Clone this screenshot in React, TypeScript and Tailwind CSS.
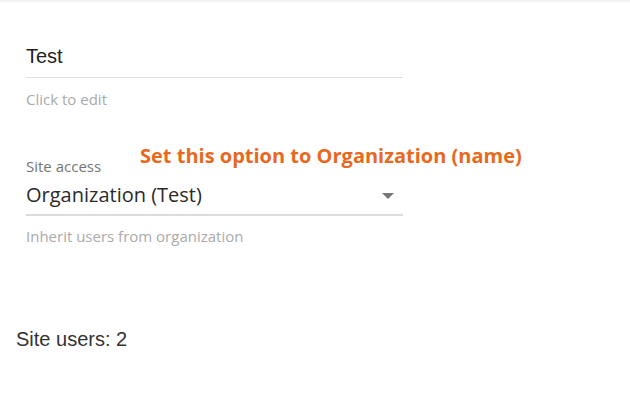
export default function App() {
  return (
    <div className="relative h-[409px] w-[630px] overflow-hidden bg-white">
      <div className="h-[3px] w-full bg-gradient-to-b from-[#ececec] to-white" />
      <div className="pl-[26px] pt-[39px]">
        <div className="w-[377px]">
          <div className="border-b border-[#dedede] pb-[7px] font-['Liberation_Sans',Arial,sans-serif] text-[20px] leading-[28px] text-[#222]">
            Test
          </div>
          <div className="mt-[11px] font-['Open_Sans',sans-serif] text-[15px] leading-[20px] text-[#aaaaaa]">
            Click to edit
          </div>
        </div>
        <div className="mt-[47px] w-[377px]">
          <div className="relative font-['Open_Sans',sans-serif] text-[15px] leading-[20px] text-[#757575]">
            Site access
            <span className="absolute left-[114px] top-[-14px] whitespace-nowrap text-[20px] font-bold leading-[28px] text-[#e8691d]">
              Set this option to Organization (name)
            </span>
          </div>
          <div className="flex items-start justify-between border-b-2 border-[#dcdcdc] pb-[5px] pr-[9px] pt-[5px]">
            <span className="font-['Open_Sans',sans-serif] text-[20px] leading-[28px] text-[#2b2b2b]">
              Organization (Test)
            </span>
            <svg width="12" height="6" viewBox="0 0 12 6" className="mt-[12px]">
              <path d="M0 0 L12 0 L6 6 Z" fill="#777" />
            </svg>
          </div>
          <div className="mt-[10px] font-['Open_Sans',sans-serif] text-[15px] leading-[20px] text-[#aaaaaa]">
            Inherit users from organization
          </div>
        </div>
      </div>
      <div className="ml-[16px] mt-[79px] font-['Liberation_Sans',Arial,sans-serif] text-[20px] leading-[28px] text-[#333]">
        Site users: 2
      </div>
    </div>
  );
}
